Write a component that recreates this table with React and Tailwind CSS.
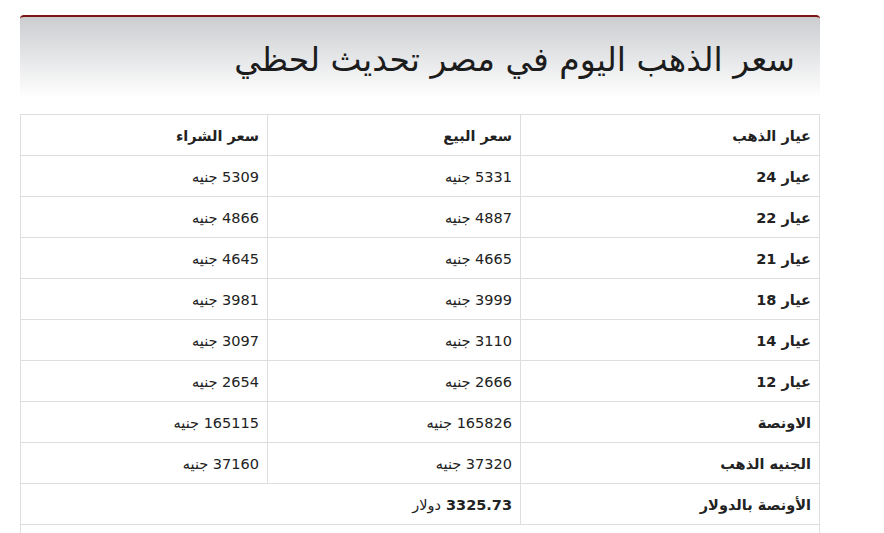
import React from 'react'

const rows = [
  ['عيار 24', '5331 جنيه', '5309 جنيه'],
  ['عيار 22', '4887 جنيه', '4866 جنيه'],
  ['عيار 21', '4665 جنيه', '4645 جنيه'],
  ['عيار 18', '3999 جنيه', '3981 جنيه'],
  ['عيار 14', '3110 جنيه', '3097 جنيه'],
  ['عيار 12', '2666 جنيه', '2654 جنيه'],
  ['الاونصة', '165826 جنيه', '165115 جنيه'],
  ['الجنيه الذهب', '37320 جنيه', '37160 جنيه'],
]

export default function App() {
  return (
    <div className="min-h-screen bg-white pt-[15px] pl-[20px]" style={{ fontFamily: '"DejaVu Sans", sans-serif' }}>
      <div dir="rtl" className="w-[800px]">
        <div className="h-[82px] rounded-t-[4px] border-t-[2px] border-[#7d1515] bg-gradient-to-b from-[#cbcdd0] to-[#ffffff] flex items-center pr-[25px] pt-[4px]">
          <h1 className="text-[33px] text-[#1c1c1c] leading-none tracking-tight">سعر الذهب اليوم في مصر تحديث لحظي</h1>
        </div>

        <table className="mt-[17px] w-full table-fixed border-collapse text-[14.5px] text-[#222]">
          <colgroup>
            <col className="w-[299px]" />
            <col className="w-[253px]" />
            <col />
          </colgroup>
          <thead>
            <tr className="h-[41px]">
              <th className="border border-[#dedede] px-2 pt-[3px] text-right font-bold">عيار الذهب</th>
              <th className="border border-[#dedede] px-2 pt-[3px] text-right font-bold">سعر البيع</th>
              <th className="border border-[#dedede] px-2 pt-[3px] text-right font-bold">سعر الشراء</th>
            </tr>
          </thead>
          <tbody>
            {rows.map((r) => (
              <tr key={r[0]} className="h-[41px]">
                <td className="border border-[#dedede] px-2 pt-[3px] font-bold">{r[0]}</td>
                <td className="border border-[#dedede] px-2 pt-[3px]">{r[1]}</td>
                <td className="border border-[#dedede] px-2 pt-[3px]">{r[2]}</td>
              </tr>
            ))}
            <tr className="h-[41px]">
              <td className="border border-[#dedede] px-2 pt-[3px] font-bold">الأونصة بالدولار</td>
              <td colSpan={2} className="border border-[#dedede] px-2 pt-[3px] font-bold">3325.73 <span className="font-normal">دولار</span></td>
            </tr>
            <tr className="h-[41px]">
              <td colSpan={3} className="border border-[#dedede] px-2"></td>
            </tr>
          </tbody>
        </table>
      </div>
    </div>
  )
}
